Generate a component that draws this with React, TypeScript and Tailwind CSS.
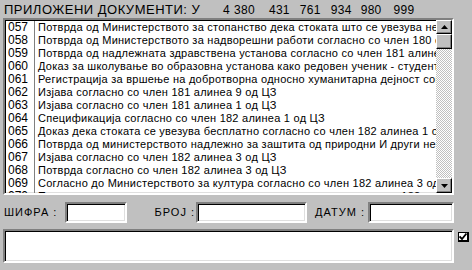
import React from 'react';

const rows: [string, string][] = [
  ['057', 'Потврда од Министерството за стопанство дека стоката што се увезува не'],
  ['058', 'Потврда од Министерството за надворешни работи согласно со член 180 од'],
  ['059', 'Потврда од надлежната здравствена установа согласно со член 181 алинеа'],
  ['060', 'Доказ за школување во образовна установа како редовен ученик - студент'],
  ['061', 'Регистрација за вршење на добротворна односно хуманитарна дејност согл'],
  ['062', 'Изјава согласно со член 181 алинеа 9 од ЦЗ'],
  ['063', 'Изјава согласно со член 181 алинеа 1 од ЦЗ'],
  ['064', 'Спецификација согласно со член 182 алинеа 1 од ЦЗ'],
  ['065', 'Доказ дека стоката се увезува бесплатно согласно со член 182 алинеа 1 од'],
  ['066', 'Потврда од министерството надлежно за заштита од природни И други несреќи'],
  ['067', 'Изјава согласно со член 182 алинеа 3 од ЦЗ'],
  ['068', 'Потврда согласно со член 182 алинеа 3 од ЦЗ'],
  ['069', 'Согласно до Министерството за култура согласно со член 182 алинеа 3 од'],
  ['070', 'Потврда од министерството надлежно за култура согласно со член 182 алинеа'],
];

const sunken =
  'border-2 border-t-[#808080] border-l-[#808080] border-r-white border-b-white shadow-[inset_1px_1px_#000,inset_-1px_-1px_#dfdfdf]';

const raised =
  'border border-t-white border-l-white border-r-black border-b-black bg-[#c0c0c0] shadow-[inset_-1px_-1px_#808080]';

function Arrow({ up }: { up?: boolean }) {
  return (
    <svg width="7" height="4" viewBox="0 0 7 4">
      <polygon points={up ? '3.5,0 7,4 0,4' : '0,0 7,0 3.5,4'} fill="#000" />
    </svg>
  );
}

export default function App() {
  return (
    <div className="w-[472px] h-[270px] bg-[#c0c0c0] flex flex-col overflow-hidden font-['Liberation_Sans',Arial,sans-serif] text-black">
      {/* Header */}
      <div className="h-[18px] pt-[2px] pl-[4px] flex items-start leading-[16px] whitespace-nowrap">
        <span className="w-[219px] shrink-0 text-[13px] tracking-[0.5px]">ПРИЛОЖЕНИ ДОКУМЕНТИ: У</span>
        <div className="flex text-[12px] tracking-[0.3px]">
          <span>4</span>
          <span className="ml-[4px]">380</span>
          <span className="ml-[14px]">431</span>
          <span className="ml-[10px]">761</span>
          <span className="ml-[10px]">934</span>
          <span className="ml-[9px]">980</span>
          <span className="ml-[12px]">999</span>
        </div>
      </div>

      {/* Document list */}
      <div className={`ml-[3px] w-[451px] h-[177px] bg-white flex ${sunken}`}>
        <div className="flex-1 overflow-hidden pt-[1px] pl-[1px]">
          {rows.map(([code, text]) => (
            <div key={code} className="h-[13px] flex text-[11px] leading-[13px] tracking-[0.25px] whitespace-nowrap">
              <div className="w-[29px] shrink-0 pl-[2px] text-[12px] tracking-normal border-r border-[#808080]">{code}</div>
              <div className="pl-[3px]">{text}</div>
            </div>
          ))}
        </div>
        <div className="w-[16px] shrink-0 flex flex-col">
          <div className={`h-[14px] flex items-center justify-center ${raised}`}>
            <Arrow up />
          </div>
          <div className={`h-[15px] ${raised}`} />
          <div className="flex-1 bg-[image:repeating-conic-gradient(#c0c0c0_0_25%,#fff_0_50%)] bg-[length:2px_2px]" />
          <div className={`h-[15px] flex items-center justify-center ${raised}`}>
            <Arrow />
          </div>
        </div>
      </div>

      {/* Fields */}
      <div className="mt-[7px] h-[21px] pl-[4px] flex items-center text-[11px] tracking-[1px]">
        <div className="w-[61px]">ШИФРА :</div>
        <div className={`w-[62px] h-[21px] bg-white ${sunken}`} />
        <div className="w-[69px] text-right pr-[1px]">БРОЈ :</div>
        <div className={`w-[111px] h-[21px] bg-white ${sunken}`} />
        <div className="w-[61px] text-right pr-[3px]">ДАТУМ :</div>
        <div className={`w-[86px] h-[21px] bg-white ${sunken}`} />
      </div>

      {/* Notes + flag */}
      <div className="mt-[6px] flex items-start">
        <div className={`ml-[3px] w-[451px] h-[34px] bg-white ${sunken}`} />
        <div className="ml-[4px] mt-[3px] w-[11px] h-[10px] bg-white border border-black border-r-2 border-b-2 flex items-center justify-center">
          <svg width="8" height="7" viewBox="0 0 8 7">
            <polyline points="0.5,3.5 3,6 7.5,0.5" fill="none" stroke="#000" strokeWidth="1.8" />
          </svg>
        </div>
      </div>
    </div>
  );
}
